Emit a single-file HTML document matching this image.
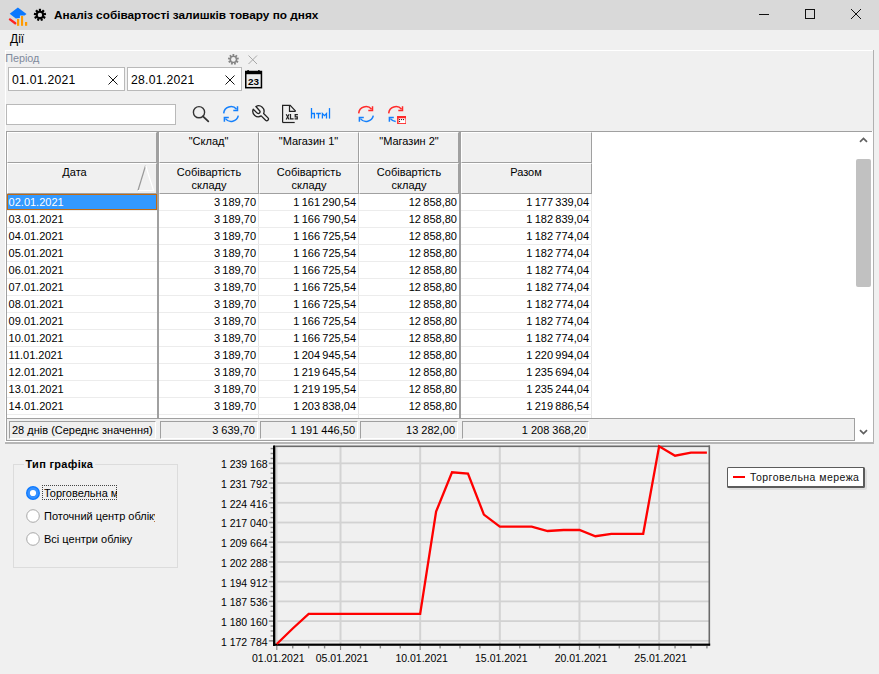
<!DOCTYPE html><html><head><meta charset="utf-8"><style>
*{margin:0;padding:0;box-sizing:border-box}
html,body{width:879px;height:674px;overflow:hidden;background:#f0f0f0;font-family:"Liberation Sans", sans-serif;color:#000}
.a{position:absolute}
.t{position:absolute;white-space:nowrap;font-size:11px;line-height:13px}
.r{text-align:right}
.c{text-align:center}
</style></head><body>
<div class="a" style="left:0;top:0;width:879px;height:30px;background:#d9d9d9"></div>
<svg class="a" style="left:0;top:0" width="30" height="30" viewBox="0 0 30 30">
<path d="M9.7 13.7 L17.9 7.6 L26.5 14 L24.6 15.4 L19.9 15.4 L19.9 17.9 L15.8 18.6 Z" fill="#0a78ff"/>
<path d="M10 19.4 L15.2 23.2" stroke="#ff2424" stroke-width="2.4" stroke-linecap="round"/>
<rect x="17" y="19" width="2.2" height="6.8" fill="#ff9a00"/>
<rect x="21" y="16" width="2.1" height="9.8" fill="#ff9a00"/>
<rect x="25" y="22" width="2.2" height="3.8" fill="#ff9a00"/>
</svg>
<svg class="a" style="left:30px;top:6px" width="20" height="20" viewBox="0 0 20 20">
<g transform="translate(9.94,8.9)" fill="#000">
<circle r="4.1"/><rect x="-1.1" y="-6.1" width="2.2" height="4" transform="rotate(0)"/><rect x="-1.1" y="-6.1" width="2.2" height="4" transform="rotate(40)"/><rect x="-1.1" y="-6.1" width="2.2" height="4" transform="rotate(80)"/><rect x="-1.1" y="-6.1" width="2.2" height="4" transform="rotate(120)"/><rect x="-1.1" y="-6.1" width="2.2" height="4" transform="rotate(160)"/><rect x="-1.1" y="-6.1" width="2.2" height="4" transform="rotate(200)"/><rect x="-1.1" y="-6.1" width="2.2" height="4" transform="rotate(240)"/><rect x="-1.1" y="-6.1" width="2.2" height="4" transform="rotate(280)"/><rect x="-1.1" y="-6.1" width="2.2" height="4" transform="rotate(320)"/>
<circle r="2.2" fill="#d9d9d9"/>
</g></svg>
<div class="t" style="left:54px;top:8px;font-size:11.8px;font-weight:bold;line-height:14px">Аналіз собівартості залишків товару по днях</div>
<div class="a" style="left:759px;top:14px;width:10px;height:1px;background:#111"></div>
<div class="a" style="left:805px;top:9px;width:10px;height:10px;border:1px solid #111"></div>
<svg class="a" style="left:851px;top:9px" width="10" height="10" viewBox="0 0 10 10"><path d="M0 0L10 10M10 0L0 10" stroke="#111" stroke-width="1"/></svg>
<div class="t" style="left:10px;top:32px;font-size:12px;line-height:14px">Дії</div>
<div class="a" style="left:5px;top:50px;width:869px;height:1px;background:#fff"></div>
<div class="a" style="left:5px;top:50px;width:1px;height:393px;background:#fff"></div>
<div class="a" style="left:873px;top:50px;width:1px;height:394px;background:#b0b0b0"></div>
<div class="t" style="left:5.2px;top:52.3px;color:#7f8a9c;font-size:10.8px">Період</div>
<svg class="a" style="left:226px;top:52px" width="15" height="15" viewBox="0 0 15 15">
<g transform="translate(7.4,7.4)" fill="#858585">
<circle r="3.7"/><rect x="-0.9" y="-5.4" width="1.8" height="3" transform="rotate(0)"/><rect x="-0.9" y="-5.4" width="1.8" height="3" transform="rotate(40)"/><rect x="-0.9" y="-5.4" width="1.8" height="3" transform="rotate(80)"/><rect x="-0.9" y="-5.4" width="1.8" height="3" transform="rotate(120)"/><rect x="-0.9" y="-5.4" width="1.8" height="3" transform="rotate(160)"/><rect x="-0.9" y="-5.4" width="1.8" height="3" transform="rotate(200)"/><rect x="-0.9" y="-5.4" width="1.8" height="3" transform="rotate(240)"/><rect x="-0.9" y="-5.4" width="1.8" height="3" transform="rotate(280)"/><rect x="-0.9" y="-5.4" width="1.8" height="3" transform="rotate(320)"/>
<circle r="2.3" fill="#f0f0f0"/>
</g></svg>
<svg class="a" style="left:248px;top:55px" width="10" height="10" viewBox="0 0 10 10"><path d="M0.5 0.5L9 9M9 0.5L0.5 9" stroke="#a8a8a8" stroke-width="1"/></svg>
<div class="a" style="left:8px;top:67px;width:117px;height:24px;background:#fff;border:1px solid #b9b9b9"></div>
<div class="t" style="left:12px;top:73px;font-size:12.2px;letter-spacing:0.25px;line-height:14px">01.01.2021</div>
<svg class="a" style="left:108px;top:75px" width="10" height="10" viewBox="0 0 10 10"><path d="M0.5 0.5L9.5 9.5M9.5 0.5L0.5 9.5" stroke="#111" stroke-width="1"/></svg>
<div class="a" style="left:127px;top:67px;width:115px;height:24px;background:#fff;border:1px solid #b9b9b9"></div>
<div class="t" style="left:131px;top:73px;font-size:12.2px;letter-spacing:0.25px;line-height:14px">28.01.2021</div>
<svg class="a" style="left:225px;top:75px" width="10" height="10" viewBox="0 0 10 10"><path d="M0.5 0.5L9.5 9.5M9.5 0.5L0.5 9.5" stroke="#111" stroke-width="1"/></svg>
<svg class="a" style="left:245px;top:70px" width="18" height="19" viewBox="0 0 18 19">
<rect x="0.75" y="1.5" width="15.7" height="16.2" fill="#ececec" stroke="#000" stroke-width="1.5"/>
<rect x="0.5" y="1.2" width="16.2" height="3" fill="#000"/>
<rect x="2.4" y="0" width="1.4" height="2" fill="#000"/><rect x="13.2" y="0" width="1.4" height="2" fill="#000"/>
<text x="8.5" y="14.5" font-family="Liberation Sans" font-weight="bold" font-size="9" text-anchor="middle" fill="#000" textLength="11" lengthAdjust="spacingAndGlyphs">23</text>
</svg>
<div class="a" style="left:6px;top:104px;width:170px;height:21px;background:#fff;border:1px solid #b9b9b9"></div>
<svg class="a" style="left:190px;top:104px" width="22" height="20" viewBox="0 0 22 20">
<circle cx="9" cy="8.2" r="5.6" fill="none" stroke="#333" stroke-width="1.4"/>
<path d="M13 12.3L18.3 17.4" stroke="#333" stroke-width="1.8" stroke-linecap="round"/>
</svg>
<svg class="a" style="left:221px;top:104px" width="20" height="20" viewBox="0 0 20 20"><g fill="none" stroke-width="1.5"><path d="M2.7 9.4 A7.3 7.3 0 0 1 15.6 5.3" stroke="#1580fb"/><path d="M16.5 2.2 V6.6 H12.3" stroke="#1580fb"/><path d="M17.3 11.6 A7.3 7.3 0 0 1 4.4 14.6" stroke="#1580fb"/><path d="M3.4000000000000004 17.8 V13.5 H7.8" stroke="#1580fb"/></g></svg>
<svg class="a" style="left:249px;top:102px" width="24" height="24" viewBox="0 0 24 24">
<path transform="translate(-0.6,-0.3)" d="M7.5 4.8 A5.5 5.5 0 0 1 15.2 11.8 L19.6 16.2 A1.7 1.7 0 0 1 17.2 18.6 L12.8 14.2 A5.5 5.5 0 0 1 4.8 7.5 L8.8 11.4 A1.7 1.7 0 0 0 11.2 9.0 Z" fill="none" stroke="#222" stroke-width="1.3" stroke-linejoin="round"/>
</svg>
<svg class="a" style="left:279px;top:102px" width="22" height="24" viewBox="0 0 22 24">
<g fill="none" stroke="#222" stroke-width="1.2">
<path d="M3.6 20.5 V3.4 H11.2 L16.6 9.1"/>
<path d="M10.5 3.4 V9.3 H16.6"/>
<path d="M3.6 20.5 H15.7"/>
<path d="M7.2 12.2 L10.1 17.5 M10.1 12.2 L7.2 17.5"/>
<path d="M11.5 12.1 V16.9 H14.6"/>
<path d="M18.9 12.7 H16.2 V14.8 H18.3 V16.9 H15.6"/>
</g>
</svg>
<svg class="a" style="left:306px;top:104px" width="28" height="20" viewBox="0 0 28 20">
<g stroke="#0a7cff" stroke-width="1.3" fill="none">
<path d="M5.5 4.1 V14.6 M5.5 9.5 H8.4 V14.6"/>
<path d="M10.2 9.5 H14.8 M12.5 9.5 V14.6"/>
<path d="M16.4 14.6 V9.5 L18.5 11.6 L20.5 9.5 V14.6"/>
<path d="M23.5 4.1 V14.6"/>
</g></svg>
<svg class="a" style="left:356px;top:104px" width="20" height="20" viewBox="0 0 20 20"><g fill="none" stroke-width="1.5"><path d="M2.7 9.4 A7.3 7.3 0 0 1 15.6 5.3" stroke="#ff2a2a"/><path d="M16.5 2.2 V6.6 H12.3" stroke="#ff2a2a"/><path d="M17.3 11.6 A7.3 7.3 0 0 1 4.4 14.6" stroke="#1580fb"/><path d="M3.4000000000000004 17.8 V13.5 H7.8" stroke="#1580fb"/></g></svg>
<svg class="a" style="left:386px;top:104px" width="20" height="20" viewBox="0 0 20 20"><g fill="none" stroke-width="1.5"><path d="M2.7 9.4 A7.3 7.3 0 0 1 15.6 5.3" stroke="#ff2a2a"/><path d="M16.5 2.2 V6.6 H12.3" stroke="#ff2a2a"/><path d="M9.7 17.5 A7.3 7.3 0 0 1 4.4 14.6" stroke="#1580fb"/><path d="M3.4000000000000004 17.8 V13.5 H7.8" stroke="#1580fb"/></g><rect x="11.85" y="12.85" width="8.3" height="7" fill="#fff" stroke="#ff2a2a" stroke-width="1.5"/><rect x="11.1" y="12.1" width="9.8" height="2.2" fill="#ff2a2a"/><rect x="13" y="15" width="1.1" height="1.1" fill="#333"/><rect x="15" y="15" width="1.1" height="1.1" fill="#333"/><rect x="17" y="15" width="1.1" height="1.1" fill="#333"/><rect x="13" y="17" width="1.1" height="1.1" fill="#333"/></svg>
<div class="a" style="left:6px;top:131px;width:867px;height:311px;background:#fff"></div>
<div class="a" style="left:6px;top:131px;width:866px;height:1px;background:#a0a0a0"></div>
<div class="a" style="left:6px;top:131px;width:1px;height:310px;background:#a0a0a0"></div>
<div class="a" style="left:7px;top:132px;width:150px;height:31px;background:#f0f0f0;border-top:1px solid #fff;border-left:1px solid #fff;border-bottom:1px solid #a0a0a0;border-right:1px solid #a0a0a0"></div>
<div class="a" style="left:7px;top:163px;width:150px;height:31px;background:#f0f0f0;border-top:1px solid #fff;border-left:1px solid #fff;border-bottom:1px solid #a0a0a0;border-right:1px solid #a0a0a0"></div>
<div class="a" style="left:159px;top:132px;width:100px;height:31px;background:#f0f0f0;border-top:1px solid #fff;border-left:1px solid #fff;border-bottom:1px solid #a0a0a0;border-right:1px solid #a0a0a0"></div>
<div class="a" style="left:159px;top:163px;width:100px;height:31px;background:#f0f0f0;border-top:1px solid #fff;border-left:1px solid #fff;border-bottom:1px solid #a0a0a0;border-right:1px solid #a0a0a0"></div>
<div class="a" style="left:259px;top:132px;width:100px;height:31px;background:#f0f0f0;border-top:1px solid #fff;border-left:1px solid #fff;border-bottom:1px solid #a0a0a0;border-right:1px solid #a0a0a0"></div>
<div class="a" style="left:259px;top:163px;width:100px;height:31px;background:#f0f0f0;border-top:1px solid #fff;border-left:1px solid #fff;border-bottom:1px solid #a0a0a0;border-right:1px solid #a0a0a0"></div>
<div class="a" style="left:359px;top:132px;width:100px;height:31px;background:#f0f0f0;border-top:1px solid #fff;border-left:1px solid #fff;border-bottom:1px solid #a0a0a0;border-right:1px solid #a0a0a0"></div>
<div class="a" style="left:359px;top:163px;width:100px;height:31px;background:#f0f0f0;border-top:1px solid #fff;border-left:1px solid #fff;border-bottom:1px solid #a0a0a0;border-right:1px solid #a0a0a0"></div>
<div class="a" style="left:461px;top:132px;width:131px;height:31px;background:#f0f0f0;border-top:1px solid #fff;border-left:1px solid #fff;border-bottom:1px solid #a0a0a0;border-right:1px solid #a0a0a0"></div>
<div class="a" style="left:461px;top:163px;width:131px;height:31px;background:#f0f0f0;border-top:1px solid #fff;border-left:1px solid #fff;border-bottom:1px solid #a0a0a0;border-right:1px solid #a0a0a0"></div>
<div class="t c" style="left:159px;top:135px;width:99px">"Склад"</div>
<div class="t c" style="left:259px;top:135px;width:99px">"Магазин 1"</div>
<div class="t c" style="left:359px;top:135px;width:100px">"Магазин 2"</div>
<div class="t c" style="left:7px;top:166px;width:135px">Дата</div>
<div class="t c" style="left:159px;top:165.5px;width:100px;line-height:13px">Собівартість<br>складу</div>
<div class="t c" style="left:259px;top:165.5px;width:100px;line-height:13px">Собівартість<br>складу</div>
<div class="t c" style="left:359px;top:165.5px;width:100px;line-height:13px">Собівартість<br>складу</div>
<div class="t c" style="left:461px;top:166px;width:130px">Разом</div>
<svg class="a" style="left:136px;top:164px" width="20" height="28" viewBox="0 0 20 28">
<path d="M2 26.5 L9.6 1.5" stroke="#999" stroke-width="1.2" fill="none"/>
<path d="M9.6 1.5 L17.5 26.5 H2" stroke="#fff" stroke-width="1.2" fill="none"/>
</svg>
<div class="a" style="left:258px;top:194px;width:1px;height:224px;background:#e6e6e6"></div>
<div class="a" style="left:358px;top:194px;width:1px;height:224px;background:#e6e6e6"></div>
<div class="a" style="left:591px;top:194px;width:1px;height:224px;background:#e6e6e6"></div>
<div class="a" style="left:7px;top:210px;width:585px;height:1px;background:#ececec"></div>
<div class="a" style="left:7px;top:194px;width:150px;height:16px;background:#3399ff;border:1px solid #c06a12"></div>
<div class="t" style="left:8.6px;top:196px;color:#fff">02.01.2021</div>
<div class="t r" style="left:146px;top:196px;width:110px;word-spacing:-0.7px">3 189,70</div>
<div class="t r" style="left:246px;top:196px;width:110px;word-spacing:-0.7px">1 161 290,54</div>
<div class="t r" style="left:347px;top:196px;width:110px;word-spacing:-0.7px">12 858,80</div>
<div class="t r" style="left:479px;top:196px;width:110px;word-spacing:-0.7px">1 177 339,04</div>
<div class="a" style="left:7px;top:227px;width:585px;height:1px;background:#ececec"></div>
<div class="t" style="left:8.6px;top:213px">03.01.2021</div>
<div class="t r" style="left:146px;top:213px;width:110px;word-spacing:-0.7px">3 189,70</div>
<div class="t r" style="left:246px;top:213px;width:110px;word-spacing:-0.7px">1 166 790,54</div>
<div class="t r" style="left:347px;top:213px;width:110px;word-spacing:-0.7px">12 858,80</div>
<div class="t r" style="left:479px;top:213px;width:110px;word-spacing:-0.7px">1 182 839,04</div>
<div class="a" style="left:7px;top:244px;width:585px;height:1px;background:#ececec"></div>
<div class="t" style="left:8.6px;top:230px">04.01.2021</div>
<div class="t r" style="left:146px;top:230px;width:110px;word-spacing:-0.7px">3 189,70</div>
<div class="t r" style="left:246px;top:230px;width:110px;word-spacing:-0.7px">1 166 725,54</div>
<div class="t r" style="left:347px;top:230px;width:110px;word-spacing:-0.7px">12 858,80</div>
<div class="t r" style="left:479px;top:230px;width:110px;word-spacing:-0.7px">1 182 774,04</div>
<div class="a" style="left:7px;top:261px;width:585px;height:1px;background:#ececec"></div>
<div class="t" style="left:8.6px;top:247px">05.01.2021</div>
<div class="t r" style="left:146px;top:247px;width:110px;word-spacing:-0.7px">3 189,70</div>
<div class="t r" style="left:246px;top:247px;width:110px;word-spacing:-0.7px">1 166 725,54</div>
<div class="t r" style="left:347px;top:247px;width:110px;word-spacing:-0.7px">12 858,80</div>
<div class="t r" style="left:479px;top:247px;width:110px;word-spacing:-0.7px">1 182 774,04</div>
<div class="a" style="left:7px;top:278px;width:585px;height:1px;background:#ececec"></div>
<div class="t" style="left:8.6px;top:264px">06.01.2021</div>
<div class="t r" style="left:146px;top:264px;width:110px;word-spacing:-0.7px">3 189,70</div>
<div class="t r" style="left:246px;top:264px;width:110px;word-spacing:-0.7px">1 166 725,54</div>
<div class="t r" style="left:347px;top:264px;width:110px;word-spacing:-0.7px">12 858,80</div>
<div class="t r" style="left:479px;top:264px;width:110px;word-spacing:-0.7px">1 182 774,04</div>
<div class="a" style="left:7px;top:295px;width:585px;height:1px;background:#ececec"></div>
<div class="t" style="left:8.6px;top:281px">07.01.2021</div>
<div class="t r" style="left:146px;top:281px;width:110px;word-spacing:-0.7px">3 189,70</div>
<div class="t r" style="left:246px;top:281px;width:110px;word-spacing:-0.7px">1 166 725,54</div>
<div class="t r" style="left:347px;top:281px;width:110px;word-spacing:-0.7px">12 858,80</div>
<div class="t r" style="left:479px;top:281px;width:110px;word-spacing:-0.7px">1 182 774,04</div>
<div class="a" style="left:7px;top:312px;width:585px;height:1px;background:#ececec"></div>
<div class="t" style="left:8.6px;top:298px">08.01.2021</div>
<div class="t r" style="left:146px;top:298px;width:110px;word-spacing:-0.7px">3 189,70</div>
<div class="t r" style="left:246px;top:298px;width:110px;word-spacing:-0.7px">1 166 725,54</div>
<div class="t r" style="left:347px;top:298px;width:110px;word-spacing:-0.7px">12 858,80</div>
<div class="t r" style="left:479px;top:298px;width:110px;word-spacing:-0.7px">1 182 774,04</div>
<div class="a" style="left:7px;top:329px;width:585px;height:1px;background:#ececec"></div>
<div class="t" style="left:8.6px;top:315px">09.01.2021</div>
<div class="t r" style="left:146px;top:315px;width:110px;word-spacing:-0.7px">3 189,70</div>
<div class="t r" style="left:246px;top:315px;width:110px;word-spacing:-0.7px">1 166 725,54</div>
<div class="t r" style="left:347px;top:315px;width:110px;word-spacing:-0.7px">12 858,80</div>
<div class="t r" style="left:479px;top:315px;width:110px;word-spacing:-0.7px">1 182 774,04</div>
<div class="a" style="left:7px;top:346px;width:585px;height:1px;background:#ececec"></div>
<div class="t" style="left:8.6px;top:332px">10.01.2021</div>
<div class="t r" style="left:146px;top:332px;width:110px;word-spacing:-0.7px">3 189,70</div>
<div class="t r" style="left:246px;top:332px;width:110px;word-spacing:-0.7px">1 166 725,54</div>
<div class="t r" style="left:347px;top:332px;width:110px;word-spacing:-0.7px">12 858,80</div>
<div class="t r" style="left:479px;top:332px;width:110px;word-spacing:-0.7px">1 182 774,04</div>
<div class="a" style="left:7px;top:363px;width:585px;height:1px;background:#ececec"></div>
<div class="t" style="left:8.6px;top:349px">11.01.2021</div>
<div class="t r" style="left:146px;top:349px;width:110px;word-spacing:-0.7px">3 189,70</div>
<div class="t r" style="left:246px;top:349px;width:110px;word-spacing:-0.7px">1 204 945,54</div>
<div class="t r" style="left:347px;top:349px;width:110px;word-spacing:-0.7px">12 858,80</div>
<div class="t r" style="left:479px;top:349px;width:110px;word-spacing:-0.7px">1 220 994,04</div>
<div class="a" style="left:7px;top:380px;width:585px;height:1px;background:#ececec"></div>
<div class="t" style="left:8.6px;top:366px">12.01.2021</div>
<div class="t r" style="left:146px;top:366px;width:110px;word-spacing:-0.7px">3 189,70</div>
<div class="t r" style="left:246px;top:366px;width:110px;word-spacing:-0.7px">1 219 645,54</div>
<div class="t r" style="left:347px;top:366px;width:110px;word-spacing:-0.7px">12 858,80</div>
<div class="t r" style="left:479px;top:366px;width:110px;word-spacing:-0.7px">1 235 694,04</div>
<div class="a" style="left:7px;top:397px;width:585px;height:1px;background:#ececec"></div>
<div class="t" style="left:8.6px;top:383px">13.01.2021</div>
<div class="t r" style="left:146px;top:383px;width:110px;word-spacing:-0.7px">3 189,70</div>
<div class="t r" style="left:246px;top:383px;width:110px;word-spacing:-0.7px">1 219 195,54</div>
<div class="t r" style="left:347px;top:383px;width:110px;word-spacing:-0.7px">12 858,80</div>
<div class="t r" style="left:479px;top:383px;width:110px;word-spacing:-0.7px">1 235 244,04</div>
<div class="a" style="left:7px;top:414px;width:585px;height:1px;background:#ececec"></div>
<div class="t" style="left:8.6px;top:400px">14.01.2021</div>
<div class="t r" style="left:146px;top:400px;width:110px;word-spacing:-0.7px">3 189,70</div>
<div class="t r" style="left:246px;top:400px;width:110px;word-spacing:-0.7px">1 203 838,04</div>
<div class="t r" style="left:347px;top:400px;width:110px;word-spacing:-0.7px">12 858,80</div>
<div class="t r" style="left:479px;top:400px;width:110px;word-spacing:-0.7px">1 219 886,54</div>
<div class="a" style="left:157px;top:132px;width:2px;height:286px;background:#a0a0a0"></div>
<div class="a" style="left:459px;top:132px;width:2px;height:286px;background:#a0a0a0"></div>
<div class="a" style="left:6px;top:418px;width:849px;height:23px;background:#f0f0f0;border:1px solid #a0a0a0"></div>
<div class="a" style="left:9px;top:421px;width:147px;height:18px;background:#efefef;border-top:1px solid #a0a0a0;border-left:1px solid #a0a0a0;border-bottom:1px solid #fff;border-right:1px solid #fff"></div>
<div class="t" style="left:12px;top:424px">28 днів (Середнє значення)</div>
<div class="a" style="left:160px;top:421px;width:98px;height:18px;background:#efefef;border-top:1px solid #a0a0a0;border-left:1px solid #a0a0a0;border-bottom:1px solid #fff;border-right:1px solid #fff"></div>
<div class="t r" style="left:145px;top:424px;width:110px">3 639,70</div>
<div class="a" style="left:260px;top:421px;width:98px;height:18px;background:#efefef;border-top:1px solid #a0a0a0;border-left:1px solid #a0a0a0;border-bottom:1px solid #fff;border-right:1px solid #fff"></div>
<div class="t r" style="left:245px;top:424px;width:110px">1 191 446,50</div>
<div class="a" style="left:360px;top:421px;width:98px;height:18px;background:#efefef;border-top:1px solid #a0a0a0;border-left:1px solid #a0a0a0;border-bottom:1px solid #fff;border-right:1px solid #fff"></div>
<div class="t r" style="left:345px;top:424px;width:110px">13 282,00</div>
<div class="a" style="left:462px;top:421px;width:127px;height:18px;background:#efefef;border-top:1px solid #a0a0a0;border-left:1px solid #a0a0a0;border-bottom:1px solid #fff;border-right:1px solid #fff"></div>
<div class="t r" style="left:476px;top:424px;width:110px">1 208 368,20</div>
<svg class="a" style="left:858px;top:134px" width="11" height="11" viewBox="0 0 11 11"><path d="M2 7.8 L5.5 4.4 L9 7.8" fill="none" stroke="#606060" stroke-width="1.7"/></svg>
<div class="a" style="left:856px;top:159px;width:15px;height:128px;background:#c1c1c1;border-radius:2px"></div>
<svg class="a" style="left:858px;top:426px" width="11" height="11" viewBox="0 0 11 11"><path d="M2 4.2 L5.5 7.6 L9 4.2" fill="none" stroke="#606060" stroke-width="1.7"/></svg>
<div class="a" style="left:5px;top:442px;width:869px;height:2px;background:#b6b6b6"></div>
<div class="a" style="left:13px;top:464px;width:165px;height:104px;border:1px solid #dcdcdc"></div>
<div class="t" style="left:24px;top:457px;padding:0 1.5px;background:#f0f0f0;font-weight:bold;font-size:11px;letter-spacing:0.3px;line-height:14px">Тип графіка</div>
<svg class="a" style="left:26px;top:486px" width="14" height="14" viewBox="0 0 14 14"><circle cx="7" cy="7" r="7" fill="#0a78ff"/><circle cx="7" cy="7" r="5.7" fill="#3590ff"/><circle cx="7" cy="7" r="3.1" fill="#fff"/></svg>
<svg class="a" style="left:26px;top:509px" width="14" height="14" viewBox="0 0 14 14"><circle cx="7" cy="7" r="6.3" fill="#fff" stroke="#a8a8a8" stroke-width="1"/></svg>
<svg class="a" style="left:26px;top:532px" width="14" height="14" viewBox="0 0 14 14"><circle cx="7" cy="7" r="6.3" fill="#fff" stroke="#a8a8a8" stroke-width="1"/></svg>
<div class="a" style="left:42px;top:485px;width:75px;height:15px;border:1px dotted #444"></div>
<div class="t" style="left:44px;top:487px;width:73px;overflow:hidden">Торговельна мережа</div>
<div class="t" style="left:44px;top:510px;width:111px;overflow:hidden">Поточний центр обліку</div>
<div class="t" style="left:44px;top:533px">Всі центри обліку</div>
<svg class="a" style="left:0;top:440px" width="879" height="234" viewBox="0 440 879 234">
<rect x="275" y="462.45" width="434" height="1.8" fill="#d2d2d2"/>
<rect x="275" y="482.17" width="434" height="1.8" fill="#d2d2d2"/>
<rect x="275" y="501.89" width="434" height="1.8" fill="#d2d2d2"/>
<rect x="275" y="521.61" width="434" height="1.8" fill="#d2d2d2"/>
<rect x="275" y="541.33" width="434" height="1.8" fill="#d2d2d2"/>
<rect x="275" y="561.05" width="434" height="1.8" fill="#d2d2d2"/>
<rect x="275" y="580.77" width="434" height="1.8" fill="#d2d2d2"/>
<rect x="275" y="600.49" width="434" height="1.8" fill="#d2d2d2"/>
<rect x="275" y="620.21" width="434" height="1.8" fill="#d2d2d2"/>
<rect x="275" y="639.93" width="434" height="1.8" fill="#d2d2d2"/>
<rect x="339.52" y="447" width="2" height="197" fill="#d3d3d3"/>
<rect x="419.17" y="447" width="2" height="197" fill="#d3d3d3"/>
<rect x="498.82" y="447" width="2" height="197" fill="#d3d3d3"/>
<rect x="578.47" y="447" width="2" height="197" fill="#d3d3d3"/>
<rect x="658.12" y="447" width="2" height="197" fill="#d3d3d3"/>
<rect x="275" y="447" width="2.5" height="197" fill="#d6d6d6"/>
<rect x="274" y="445.5" width="436" height="1.6" fill="#6a6a6a"/>
<rect x="708.5" y="445.5" width="1.6" height="199" fill="#6a6a6a"/>
<rect x="273" y="445.5" width="2" height="200.5" fill="#000"/>
<rect x="275" y="447" width="0.6" height="197" fill="#666"/>
<rect x="273.2" y="643.6" width="437" height="2.2" fill="#000"/>
<rect x="268.8" y="462.55" width="4.2" height="1.6" fill="#8c8c8c"/>
<rect x="268.8" y="482.27" width="4.2" height="1.6" fill="#8c8c8c"/>
<rect x="268.8" y="501.99" width="4.2" height="1.6" fill="#8c8c8c"/>
<rect x="268.8" y="521.71" width="4.2" height="1.6" fill="#8c8c8c"/>
<rect x="268.8" y="541.43" width="4.2" height="1.6" fill="#8c8c8c"/>
<rect x="268.8" y="561.15" width="4.2" height="1.6" fill="#8c8c8c"/>
<rect x="268.8" y="580.87" width="4.2" height="1.6" fill="#8c8c8c"/>
<rect x="268.8" y="600.59" width="4.2" height="1.6" fill="#8c8c8c"/>
<rect x="268.8" y="620.31" width="4.2" height="1.6" fill="#8c8c8c"/>
<rect x="268.8" y="640.03" width="4.2" height="1.6" fill="#8c8c8c"/>
<rect x="270.6" y="447.86" width="2.4" height="1.4" fill="#8c8c8c"/>
<rect x="270.6" y="452.79" width="2.4" height="1.4" fill="#8c8c8c"/>
<rect x="270.6" y="457.72" width="2.4" height="1.4" fill="#8c8c8c"/>
<rect x="270.6" y="467.58" width="2.4" height="1.4" fill="#8c8c8c"/>
<rect x="270.6" y="472.51" width="2.4" height="1.4" fill="#8c8c8c"/>
<rect x="270.6" y="477.44" width="2.4" height="1.4" fill="#8c8c8c"/>
<rect x="270.6" y="487.30" width="2.4" height="1.4" fill="#8c8c8c"/>
<rect x="270.6" y="492.23" width="2.4" height="1.4" fill="#8c8c8c"/>
<rect x="270.6" y="497.16" width="2.4" height="1.4" fill="#8c8c8c"/>
<rect x="270.6" y="507.02" width="2.4" height="1.4" fill="#8c8c8c"/>
<rect x="270.6" y="511.95" width="2.4" height="1.4" fill="#8c8c8c"/>
<rect x="270.6" y="516.88" width="2.4" height="1.4" fill="#8c8c8c"/>
<rect x="270.6" y="526.74" width="2.4" height="1.4" fill="#8c8c8c"/>
<rect x="270.6" y="531.67" width="2.4" height="1.4" fill="#8c8c8c"/>
<rect x="270.6" y="536.60" width="2.4" height="1.4" fill="#8c8c8c"/>
<rect x="270.6" y="546.46" width="2.4" height="1.4" fill="#8c8c8c"/>
<rect x="270.6" y="551.39" width="2.4" height="1.4" fill="#8c8c8c"/>
<rect x="270.6" y="556.32" width="2.4" height="1.4" fill="#8c8c8c"/>
<rect x="270.6" y="566.18" width="2.4" height="1.4" fill="#8c8c8c"/>
<rect x="270.6" y="571.11" width="2.4" height="1.4" fill="#8c8c8c"/>
<rect x="270.6" y="576.04" width="2.4" height="1.4" fill="#8c8c8c"/>
<rect x="270.6" y="585.90" width="2.4" height="1.4" fill="#8c8c8c"/>
<rect x="270.6" y="590.83" width="2.4" height="1.4" fill="#8c8c8c"/>
<rect x="270.6" y="595.76" width="2.4" height="1.4" fill="#8c8c8c"/>
<rect x="270.6" y="605.62" width="2.4" height="1.4" fill="#8c8c8c"/>
<rect x="270.6" y="610.55" width="2.4" height="1.4" fill="#8c8c8c"/>
<rect x="270.6" y="615.48" width="2.4" height="1.4" fill="#8c8c8c"/>
<rect x="270.6" y="625.34" width="2.4" height="1.4" fill="#8c8c8c"/>
<rect x="270.6" y="630.27" width="2.4" height="1.4" fill="#8c8c8c"/>
<rect x="270.6" y="635.20" width="2.4" height="1.4" fill="#8c8c8c"/>
<text x="267.6" y="468.25" font-family="Liberation Sans" font-size="10.5" text-anchor="end" fill="#000">1 239 168</text>
<text x="267.6" y="487.97" font-family="Liberation Sans" font-size="10.5" text-anchor="end" fill="#000">1 231 792</text>
<text x="267.6" y="507.69" font-family="Liberation Sans" font-size="10.5" text-anchor="end" fill="#000">1 224 416</text>
<text x="267.6" y="527.41" font-family="Liberation Sans" font-size="10.5" text-anchor="end" fill="#000">1 217 040</text>
<text x="267.6" y="547.13" font-family="Liberation Sans" font-size="10.5" text-anchor="end" fill="#000">1 209 664</text>
<text x="267.6" y="566.85" font-family="Liberation Sans" font-size="10.5" text-anchor="end" fill="#000">1 202 288</text>
<text x="267.6" y="586.57" font-family="Liberation Sans" font-size="10.5" text-anchor="end" fill="#000">1 194 912</text>
<text x="267.6" y="606.29" font-family="Liberation Sans" font-size="10.5" text-anchor="end" fill="#000">1 187 536</text>
<text x="267.6" y="626.01" font-family="Liberation Sans" font-size="10.5" text-anchor="end" fill="#000">1 180 160</text>
<text x="267.6" y="645.73" font-family="Liberation Sans" font-size="10.5" text-anchor="end" fill="#000">1 172 784</text>
<rect x="276.20" y="646" width="1.2" height="4" fill="#888"/>
<rect x="339.92" y="646" width="1.2" height="4" fill="#888"/>
<rect x="419.57" y="646" width="1.2" height="4" fill="#888"/>
<rect x="499.22" y="646" width="1.2" height="4" fill="#888"/>
<rect x="578.87" y="646" width="1.2" height="4" fill="#888"/>
<rect x="658.52" y="646" width="1.2" height="4" fill="#888"/>
<rect x="292.03" y="646" width="1.4" height="2.4" fill="#8c8c8c"/>
<rect x="307.96" y="646" width="1.4" height="2.4" fill="#8c8c8c"/>
<rect x="323.89" y="646" width="1.4" height="2.4" fill="#8c8c8c"/>
<rect x="359.73" y="646" width="1.4" height="2.4" fill="#8c8c8c"/>
<rect x="379.65" y="646" width="1.4" height="2.4" fill="#8c8c8c"/>
<rect x="399.56" y="646" width="1.4" height="2.4" fill="#8c8c8c"/>
<rect x="439.38" y="646" width="1.4" height="2.4" fill="#8c8c8c"/>
<rect x="459.30" y="646" width="1.4" height="2.4" fill="#8c8c8c"/>
<rect x="479.21" y="646" width="1.4" height="2.4" fill="#8c8c8c"/>
<rect x="519.03" y="646" width="1.4" height="2.4" fill="#8c8c8c"/>
<rect x="538.94" y="646" width="1.4" height="2.4" fill="#8c8c8c"/>
<rect x="558.86" y="646" width="1.4" height="2.4" fill="#8c8c8c"/>
<rect x="598.68" y="646" width="1.4" height="2.4" fill="#8c8c8c"/>
<rect x="618.60" y="646" width="1.4" height="2.4" fill="#8c8c8c"/>
<rect x="638.51" y="646" width="1.4" height="2.4" fill="#8c8c8c"/>
<rect x="674.35" y="646" width="1.4" height="2.4" fill="#8c8c8c"/>
<rect x="690.28" y="646" width="1.4" height="2.4" fill="#8c8c8c"/>
<rect x="706.21" y="646" width="1.4" height="2.4" fill="#8c8c8c"/>
<text x="278.30" y="662.3" font-family="Liberation Sans" font-size="10.5" text-anchor="middle" fill="#000">01.01.2021</text>
<text x="342.02" y="662.3" font-family="Liberation Sans" font-size="10.5" text-anchor="middle" fill="#000">05.01.2021</text>
<text x="421.67" y="662.3" font-family="Liberation Sans" font-size="10.5" text-anchor="middle" fill="#000">10.01.2021</text>
<text x="501.32" y="662.3" font-family="Liberation Sans" font-size="10.5" text-anchor="middle" fill="#000">15.01.2021</text>
<text x="580.97" y="662.3" font-family="Liberation Sans" font-size="10.5" text-anchor="middle" fill="#000">20.01.2021</text>
<text x="660.62" y="662.3" font-family="Liberation Sans" font-size="10.5" text-anchor="middle" fill="#000">25.01.2021</text>
<polyline points="276.80,644.00 292.73,628.50 308.66,613.80 324.59,613.96 340.52,613.96 356.45,613.96 372.38,613.96 388.31,613.96 404.24,613.96 420.17,613.96 436.10,511.60 452.03,472.30 467.96,473.50 483.89,514.60 499.82,526.60 515.75,526.60 531.68,526.60 547.61,531.00 563.54,530.00 579.47,530.00 595.40,536.20 611.33,533.80 627.26,533.80 643.19,533.80 659.12,446.30 675.05,455.70 690.98,452.70 706.91,452.70" fill="none" stroke="#ff0000" stroke-width="2.3" stroke-linejoin="miter"/>
</svg>
<div class="a" style="left:729px;top:469px;width:138px;height:21px;background:#dedede;border-radius:2px"></div>
<div class="a" style="left:727px;top:467px;width:138px;height:21px;background:#fff;border:1px solid #5c5c5c;border-right-width:2px;border-bottom-width:2px;border-radius:1.5px"></div>
<div class="a" style="left:733px;top:475.5px;width:12px;height:2.5px;background:#f00"></div>
<div class="t" style="left:750px;top:470.5px;font-size:10.5px;letter-spacing:0.45px;color:#111">Торговельна мережа</div>
</body></html>
